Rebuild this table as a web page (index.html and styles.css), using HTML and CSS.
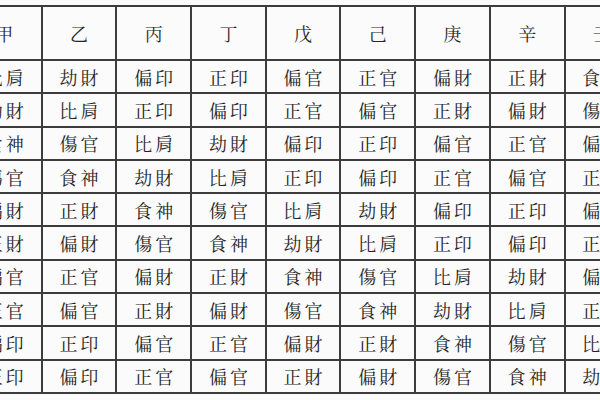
FILE: index.html
```html
<!DOCTYPE html>
<html lang="zh-Hant">
<head>
<meta charset="utf-8">
<link rel="stylesheet" href="styles.css">
</head>
<body>
<div class="frame">
<table class="gods">
<colgroup><col><col><col><col><col><col><col><col><col></colgroup>
<thead>
<tr><th>甲</th><th>乙</th><th>丙</th><th>丁</th><th>戊</th><th>己</th><th>庚</th><th>辛</th><th>壬</th></tr>
</thead>
<tbody>
<tr><td>比肩</td><td>劫財</td><td>偏印</td><td>正印</td><td>偏官</td><td>正官</td><td>偏財</td><td>正財</td><td>食神</td></tr>
<tr><td>劫財</td><td>比肩</td><td>正印</td><td>偏印</td><td>正官</td><td>偏官</td><td>正財</td><td>偏財</td><td>傷官</td></tr>
<tr><td>食神</td><td>傷官</td><td>比肩</td><td>劫財</td><td>偏印</td><td>正印</td><td>偏官</td><td>正官</td><td>偏財</td></tr>
<tr><td>傷官</td><td>食神</td><td>劫財</td><td>比肩</td><td>正印</td><td>偏印</td><td>正官</td><td>偏官</td><td>正財</td></tr>
<tr><td>偏財</td><td>正財</td><td>食神</td><td>傷官</td><td>比肩</td><td>劫財</td><td>偏印</td><td>正印</td><td>偏官</td></tr>
<tr><td>正財</td><td>偏財</td><td>傷官</td><td>食神</td><td>劫財</td><td>比肩</td><td>正印</td><td>偏印</td><td>正官</td></tr>
<tr><td>偏官</td><td>正官</td><td>偏財</td><td>正財</td><td>食神</td><td>傷官</td><td>比肩</td><td>劫財</td><td>偏印</td></tr>
<tr><td>正官</td><td>偏官</td><td>正財</td><td>偏財</td><td>傷官</td><td>食神</td><td>劫財</td><td>比肩</td><td>正印</td></tr>
<tr><td>偏印</td><td>正印</td><td>偏官</td><td>正官</td><td>偏財</td><td>正財</td><td>食神</td><td>傷官</td><td>比肩</td></tr>
<tr><td>正印</td><td>偏印</td><td>正官</td><td>偏官</td><td>正財</td><td>偏財</td><td>傷官</td><td>食神</td><td>劫財</td></tr>
</tbody>
</table>
</div>
</body>
</html>
```

FILE: styles.css
```css
html, body {
  margin: 0;
  padding: 0;
  background: #fbfbfb;
}

.frame {
  width: 600px;
  height: 400px;
  overflow: hidden;
  background: #fbfbfb;
}

.gods {
  border-collapse: collapse;
  table-layout: fixed;
  width: 672px;
  margin-top: 5px;
  margin-left: -34px;
  font-family: "Noto Serif CJK TC", "Noto Sans CJK TC", "Noto Sans CJK SC", serif;
  color: #262626;
}

.gods col {
  width: 74.7px;
}

.gods th,
.gods td {
  border: 2px solid #3c3c3c;
  text-align: center;
  vertical-align: middle;
  padding: 0 0 0 3px;
  letter-spacing: 3px;
  font-size: 18px;
  font-weight: 400;
  line-height: 1;
  white-space: nowrap;
  overflow: hidden;
}

.gods th {
  height: 52px;
}

.gods td {
  height: 31.3px;
}
```
